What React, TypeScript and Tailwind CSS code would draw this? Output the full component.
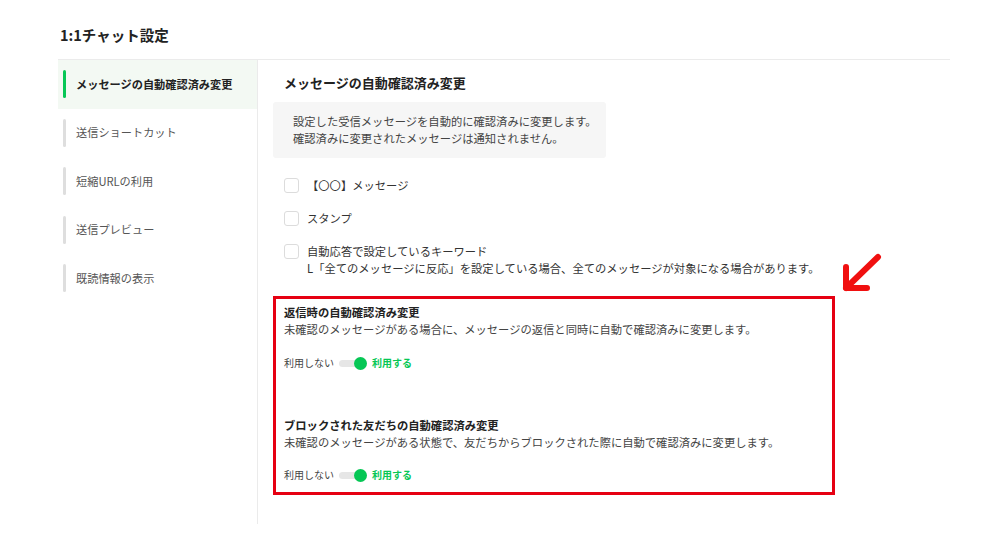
import React from 'react';

const font = { fontFamily: '"Noto Sans CJK JP", "Noto Sans", sans-serif' };

const navItems = [
  'メッセージの自動確認済み変更',
  '送信ショートカット',
  '短縮URLの利用',
  '送信プレビュー',
  '既読情報の表示',
];

function Check({ label, note }: { label: string; note?: string }) {
  return (
    <div className="flex items-start gap-[8px] ml-[11px]">
      <div className="mt-[1px] h-[15px] w-[15px] shrink-0 rounded-[3px] border border-[#dcdcdc] bg-white" />
      <div className="text-[11.3px] leading-[17px] text-[#333]">
        <div>{label}</div>
        {note && <div>{note}</div>}
      </div>
    </div>
  );
}

function Toggle() {
  return (
    <div className="flex h-[14px] items-center text-[10px] leading-[14px]">
      <span className="text-[#444]">利用しない</span>
      <div className="relative ml-[5px] h-[7px] w-[26px] rounded-full bg-[#e6e6e6]">
        <div className="absolute right-[-2px] top-[-3px] h-[13px] w-[13px] rounded-full bg-[#06c755]" />
      </div>
      <span className="ml-[7px] font-bold text-[#06c755]">利用する</span>
    </div>
  );
}

export default function App() {
  return (
    <div className="relative h-[540px] w-[1000px] bg-white pl-[58px] pt-[24px]" style={font}>
      <div className="w-[892px]">
        <h1 className="pl-[2px] text-[14.5px] font-bold leading-[22px] text-[#222]">1:1チャット設定</h1>
        <div className="mt-[13px] flex border-t border-[#ebebeb]">
          {/* sidebar */}
          <div className="h-[464px] w-[200px] shrink-0 border-r border-[#ebebeb]">
            {navItems.map((t, i) => (
              <div
                key={t}
                className={`flex h-[48.5px] items-center pl-[5px] ${i === 0 ? 'bg-[#f3f9f3]' : ''}`}
              >
                <div className={`h-[28px] w-[3px] rounded-full ${i === 0 ? 'bg-[#06c755]' : 'bg-[#dedede]'}`} />
                <span
                  className={`ml-[10px] text-[11.2px] ${i === 0 ? 'font-bold text-[#222]' : 'text-[#555]'}`}
                >
                  {t}
                </span>
              </div>
            ))}
          </div>

          {/* content */}
          <div className="pl-[15px] pt-[15px]">
            <h2 className="ml-[11px] text-[13px] font-bold leading-[16px] text-[#222]">
              メッセージの自動確認済み変更
            </h2>
            <div className="mt-[11px] w-[333px] rounded-[3px] bg-[#f6f6f6] pb-[11px] pl-[20px] pt-[11px] text-[11.3px] leading-[17px] text-[#444]">
              <div>設定した受信メッセージを自動的に確認済みに変更します。</div>
              <div>確認済みに変更されたメッセージは通知されません。</div>
            </div>

            <div className="mt-[19px] flex flex-col gap-[16px]">
              <Check label="【〇〇】メッセージ" />
              <Check label="スタンプ" />
              <Check
                label="自動応答で設定しているキーワード"
                note="L「全てのメッセージに反応」を設定している場合、全てのメッセージが対象になる場合があります。"
              />
            </div>

            <div className="mt-[19px] w-[562px] border-[3px] border-[#e60012] pb-[10px] pl-[8px] pt-[5px]">
              <div className="text-[11.3px] font-bold leading-[17px] text-[#222]">返信時の自動確認済み変更</div>
              <div className="text-[11.3px] leading-[17px] text-[#444]">
                未確認のメッセージがある場合に、メッセージの返信と同時に自動で確認済みに変更します。
              </div>
              <div className="mt-[18px]">
                <Toggle />
              </div>

              <div className="mt-[47px] text-[11.3px] font-bold leading-[17px] text-[#222]">
                ブロックされた友だちの自動確認済み変更
              </div>
              <div className="text-[11.3px] leading-[17px] text-[#444]">
                未確認のメッセージがある状態で、友だちからブロックされた際に自動で確認済みに変更します。
              </div>
              <div className="mt-[17px]">
                <Toggle />
              </div>
            </div>
          </div>
        </div>
      </div>

      {/* annotation arrow */}
      <svg className="absolute left-[838px] top-[250px]" width="46" height="46" viewBox="0 0 46 46">
        <g stroke="#f01010" strokeWidth="6" strokeLinecap="round" strokeLinejoin="round" fill="none">
          <line x1="40" y1="7" x2="8" y2="38" />
          <polyline points="8,17 8,38 29,38" />
        </g>
      </svg>
    </div>
  );
}
